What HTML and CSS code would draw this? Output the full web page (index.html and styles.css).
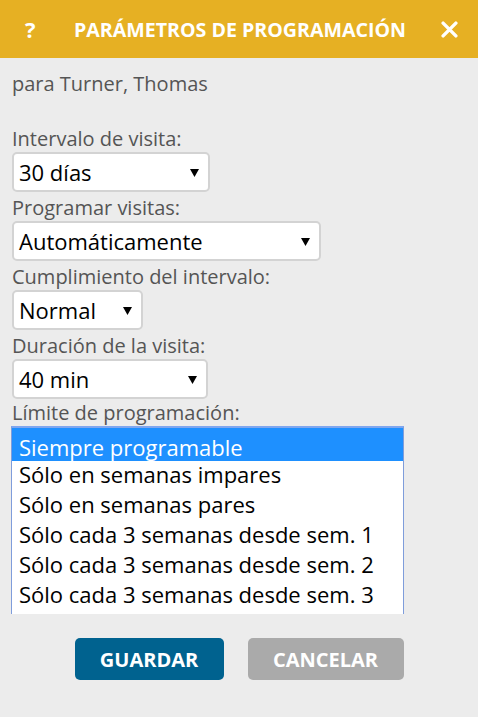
FILE: index.html
```html
<!DOCTYPE html>
<html lang="es">
<head>
<meta charset="utf-8">
<title>Parámetros de programación</title>
<link rel="stylesheet" href="styles.css">
</head>
<body>
<div class="dialog">
  <header class="header">
    <span class="help">?</span>
    <h1 class="title">PARÁMETROS DE PROGRAMACIÓN</h1>
    <svg class="close" width="17" height="17" viewBox="0 0 16 16"><path d="M2 2 L14 14 M14 2 L2 14" stroke="#fff" stroke-width="3.2" stroke-linecap="round"/></svg>
  </header>
  <div class="content">
    <p class="patient">para Turner, Thomas</p>

    <label class="label first">Intervalo de visita:</label>
    <div class="select w198"><span>30 días</span><svg class="arrow" width="9" height="9" viewBox="0 0 10 10"><path d="M0 1 H10 L5 10 Z" fill="#000"/></svg></div>

    <label class="label">Programar visitas:</label>
    <div class="select w309"><span>Automáticamente</span><svg class="arrow" width="9" height="9" viewBox="0 0 10 10"><path d="M0 1 H10 L5 10 Z" fill="#000"/></svg></div>

    <label class="label">Cumplimiento del intervalo:</label>
    <div class="select w131"><span>Normal</span><svg class="arrow" width="9" height="9" viewBox="0 0 10 10"><path d="M0 1 H10 L5 10 Z" fill="#000"/></svg></div>

    <label class="label">Duración de la visita:</label>
    <div class="select w196"><span>40 min</span><svg class="arrow" width="9" height="9" viewBox="0 0 10 10"><path d="M0 1 H10 L5 10 Z" fill="#000"/></svg></div>

    <label class="label tight">Límite de programación:</label>
    <div class="listbox">
      <div class="option selected">Siempre programable</div>
      <div class="option">Sólo en semanas impares</div>
      <div class="option">Sólo en semanas pares</div>
      <div class="option">Sólo cada 3 semanas desde sem. 1</div>
      <div class="option">Sólo cada 3 semanas desde sem. 2</div>
      <div class="option">Sólo cada 3 semanas desde sem. 3</div>
    </div>
  </div>
  <div class="buttons">
    <button class="btn save">GUARDAR</button>
    <button class="btn cancel">CANCELAR</button>
  </div>
</div>
</body>
</html>
```

FILE: styles.css
```css
html, body {
  margin: 0;
  padding: 0;
  background: #ececec;
  font-family: "Open Sans", "Noto Sans", sans-serif;
}

.dialog {
  width: 478px;
  height: 717px;
  display: flex;
  flex-direction: column;
}

.header {
  height: 58px;
  flex: none;
  background: #e6b023;
  display: flex;
  align-items: center;
  justify-content: space-between;
  padding: 0 20px 0 25px;
  box-sizing: border-box;
  color: #fff;
}

.help {
  font-size: 22px;
  font-weight: 700;
  width: 14px;
}

.title {
  margin: 0;
  font-size: 19.6px;
  font-weight: 700;
}

.close {
  display: block;
}

.content {
  padding: 0 0 0 12px;
}

.patient {
  margin: 12px 0 0;
  font-size: 20px;
  line-height: 27px;
  color: #555;
}

.label {
  display: block;
  font-size: 20px;
  line-height: 27px;
  color: #555;
  margin-top: 2px;
}

.label.first {
  margin-top: 28px;
}

.label.tight {
  margin-top: 0;
}

.select {
  height: 40px;
  box-sizing: border-box;
  border: 2px solid #d3d3d3;
  border-radius: 5px;
  background: #fff;
  display: flex;
  align-items: center;
  justify-content: space-between;
  padding: 0 9px 0 5px;
  font-size: 22px;
  color: #000;
}

.w198 { width: 198px; }
.w309 { width: 309px; }
.w131 { width: 131px; }
.w196 { width: 196px; }

.arrow {
  display: block;
}

.listbox {
  margin-left: -1px;
  width: 393px;
  height: 188px;
  box-sizing: border-box;
  border: 1px solid #7f9ddb;
  border-top: 2px solid #7fa6ef;
  border-bottom: 0;
  background: #fff;
  overflow: hidden;
}

.option {
  height: 30px;
  line-height: 26px;
  padding-left: 7px;
  font-size: 22px;
  color: #000;
  white-space: nowrap;
}

.option.selected {
  background: #1e90ff;
  color: #fff;
  height: 33px;
  box-sizing: border-box;
  padding-top: 6px;
}

.buttons {
  display: flex;
  justify-content: center;
  gap: 24px;
  padding-top: 24px;
}

.btn {
  height: 42px;
  border: none;
  border-radius: 5px;
  color: #fff;
  font-family: "Open Sans", "Noto Sans", sans-serif;
  font-weight: 700;
  font-size: 20px;
  padding: 0;
}

.save {
  width: 149px;
  background: #00628f;
}

.cancel {
  width: 156px;
  background: #aaaaaa;
}
```
